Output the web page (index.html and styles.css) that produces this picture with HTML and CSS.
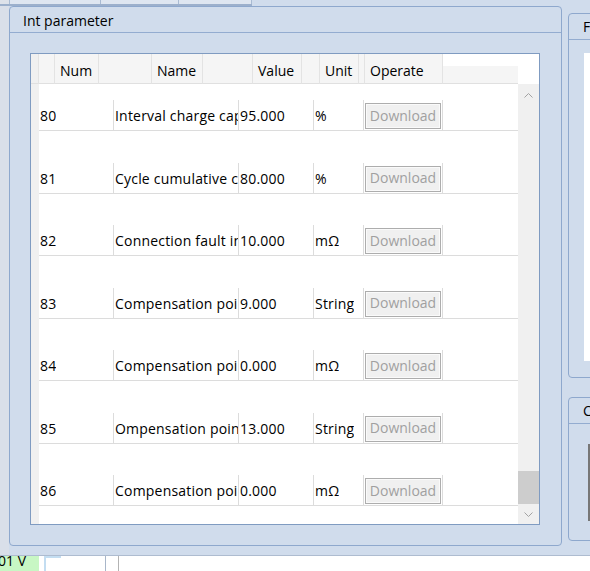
FILE: index.html
```html
<!DOCTYPE html>
<html>
<head>
<meta charset="utf-8">
<link rel="stylesheet" href="styles.css">
</head>
<body>
<div class="screen">
  <div class="topbar">
    <div class="tabs">
      <div class="tab tab-a"></div>
      <div class="tab tab-b"></div>
      <div class="tab tab-c"></div>
      <div class="tab tab-d"></div>
    </div>
  </div>
  <div class="main">
    <div class="leftstrip"></div>
    <section class="group g-main">
      <div class="group-title">Int parameter</div>
      <div class="main-body">
        <div class="grid">
          <div class="grid-head">
            <div class="hc w8"></div>
            <div class="hc w16"></div>
            <div class="hc w44">Num</div>
            <div class="hc w53"></div>
            <div class="hc w51">Name</div>
            <div class="hc w50"></div>
            <div class="hc w49">Value</div>
            <div class="hc w18"></div>
            <div class="hc w39">Unit</div>
            <div class="hc w6"></div>
            <div class="hc w78">Operate</div>
            <div class="hc hfill"></div>
            <div class="hblank"></div>
          </div>
          <div class="grid-body">
            <div class="rowhead-col"></div>
            <div class="rows">
              <div class="rows-inner">
                <div class="row"><div class="cells"><div class="c num"><span class="t">80</span></div><div class="c name"><span class="t">Interval charge capacity</span></div><div class="c val"><span class="t">95.000</span></div><div class="c unit"><span class="t">%</span></div><div class="c op"><button class="dl" disabled>Download</button></div></div></div>
                <div class="row"><div class="cells"><div class="c num"><span class="t">81</span></div><div class="c name"><span class="t">Cycle cumulative charge</span></div><div class="c val"><span class="t">80.000</span></div><div class="c unit"><span class="t">%</span></div><div class="c op"><button class="dl" disabled>Download</button></div></div></div>
                <div class="row"><div class="cells"><div class="c num"><span class="t">82</span></div><div class="c name"><span class="t">Connection fault internal resistance</span></div><div class="c val"><span class="t">10.000</span></div><div class="c unit"><span class="t">mΩ</span></div><div class="c op"><button class="dl" disabled>Download</button></div></div></div>
                <div class="row"><div class="cells"><div class="c num"><span class="t">83</span></div><div class="c name"><span class="t">Compensation point 1</span></div><div class="c val"><span class="t">9.000</span></div><div class="c unit"><span class="t">String</span></div><div class="c op"><button class="dl" disabled>Download</button></div></div></div>
                <div class="row"><div class="cells"><div class="c num"><span class="t">84</span></div><div class="c name"><span class="t">Compensation point 2</span></div><div class="c val"><span class="t">0.000</span></div><div class="c unit"><span class="t">mΩ</span></div><div class="c op"><button class="dl" disabled>Download</button></div></div></div>
                <div class="row"><div class="cells"><div class="c num"><span class="t">85</span></div><div class="c name"><span class="t">Ompensation point 3</span></div><div class="c val"><span class="t">13.000</span></div><div class="c unit"><span class="t">String</span></div><div class="c op"><button class="dl" disabled>Download</button></div></div></div>
                <div class="row"><div class="cells"><div class="c num"><span class="t">86</span></div><div class="c name"><span class="t">Compensation point 4</span></div><div class="c val"><span class="t">0.000</span></div><div class="c unit"><span class="t">mΩ</span></div><div class="c op"><button class="dl" disabled>Download</button></div></div></div>
                <div class="row"><div class="cells"><div class="c num"><span class="t">87</span></div><div class="c name"><span class="t">Compensation point 5</span></div><div class="c val"><span class="t">0.000</span></div><div class="c unit"><span class="t">mΩ</span></div><div class="c op"><button class="dl" disabled>Download</button></div></div></div>
              </div>
            </div>
            <div class="vscroll">
              <div class="sb-up"><svg width="9" height="5" viewBox="0 0 9 5"><polyline points="0.5,4.5 4.5,0.5 8.5,4.5" fill="none" stroke="#a3a3a3" stroke-width="1"/></svg></div>
              <div class="sb-track"><div class="sb-thumb"></div></div>
              <div class="sb-down"><svg width="9" height="5" viewBox="0 0 9 5"><polyline points="0.5,0.5 4.5,4.5 8.5,0.5" fill="none" stroke="#a3a3a3" stroke-width="1"/></svg></div>
            </div>
          </div>
        </div>
      </div>
    </section>
    <div class="side">
      <section class="group g-f">
        <div class="group-title side-title">F</div>
        <div class="f-body"><div class="f-white"></div></div>
      </section>
      <section class="group g-c">
        <div class="group-title side-title">C</div>
        <div class="c-body"><div class="c-line"></div></div>
      </section>
    </div>
  </div>
  <div class="status">
    <div class="st-green"><span class="st-text">01 V</span></div>
    <div class="st-gap"></div>
    <div class="st-cell"><div class="st-glint"></div></div>
    <div class="st-sep"></div>
  </div>
</div>
</body>
</html>
```

FILE: styles.css
```css
html, body {
  margin: 0;
  padding: 0;
}
body {
  width: 590px;
  height: 571px;
  overflow: hidden;
  font-family: "Open Sans", "Noto Sans", sans-serif;
  font-size: 14px;
  color: #000;
  background: #fff;
}
.screen {
  width: 590px;
  height: 571px;
  display: flex;
  flex-direction: column;
  background: #d0dcec;
  overflow: hidden;
}

/* top tabs strip */
.topbar {
  height: 6px;
  flex: none;
  display: flex;
}
.tabs {
  width: 252px;
  height: 6px;
  display: flex;
  box-sizing: border-box;
  border-bottom: 2px solid #9cb0cc;
  background: #dee6f1;
}
.tab {
  box-sizing: border-box;
  border-right: 1px solid #a9bbd3;
}
.tab-a { width: 10px; background: #dde2ea; }
.tab-b { width: 91px; }
.tab-c { width: 78px; }
.tab-d { width: 73px; }

/* main area */
.main {
  flex: none;
  height: 550px;
  box-sizing: border-box;
  border-bottom: 1px solid #aebcd0;
  display: flex;
  overflow: hidden;
}
.leftstrip {
  width: 9px;
  flex: none;
  background: #d9dfe9;
}
.group {
  box-sizing: border-box;
  border: 1px solid #8ea8cd;
  border-radius: 4px;
  display: flex;
  flex-direction: column;
  flex: none;
}
.group-title {
  flex: none;
  height: 26px;
  box-sizing: border-box;
  border-bottom: 1px solid #93acd0;
  padding-left: 13px;
  line-height: 27px;
  white-space: nowrap;
  overflow: hidden;
}
.g-main {
  width: 553px;
  height: 540px;
}
.main-body {
  padding: 20px 21px 20px 20px;
}

/* grid */
.grid {
  width: 510px;
  height: 472px;
  box-sizing: border-box;
  border: 1px solid #7f9bc1;
  background: #fff;
  display: flex;
  flex-direction: column;
}
.grid-head {
  flex: none;
  height: 30px;
  display: flex;
}
.hc {
  flex: none;
  height: 30px;
  box-sizing: border-box;
  background: #f5f5f5;
  border-right: 1px solid #e3e3e3;
  border-bottom: 1px solid #e0e0e0;
  padding: 2px 0 0 5px;
  line-height: 29px;
  white-space: nowrap;
  overflow: hidden;
}
.w8 { width: 8px; padding: 0; background: #f0f0f0; }
.w16 { width: 16px; padding: 0; }
.w44 { width: 44px; }
.w53 { width: 53px; padding: 0; }
.w51 { width: 51px; }
.w50 { width: 50px; padding: 0; }
.w49 { width: 49px; }
.w18 { width: 18px; padding: 0; }
.w39 { width: 39px; }
.w6 { width: 6px; padding: 0; }
.w78 { width: 78px; }
.hfill {
  width: 75px;
  height: 18px;
  margin-top: 12px;
  padding: 0;
  border-right: none;
}
.hblank {
  width: 21px;
  flex: none;
}

.grid-body {
  flex: 1;
  min-height: 0;
  display: flex;
}
.rowhead-col {
  width: 8px;
  flex: none;
  background: #f0f0f0;
}
.rows {
  width: 479px;
  flex: none;
  overflow: hidden;
}
.rows-inner {
  margin-top: -15.5px;
}
.row {
  height: 62.5px;
  box-sizing: border-box;
  padding-top: 31.5px;
  border-bottom: 1px solid #dcdcdc;
}
.cells {
  display: flex;
  height: 30px;
}
.c {
  flex: none;
  height: 30px;
  box-sizing: border-box;
  border-right: 1px solid #dcdcdc;
  padding-left: 1px;
  line-height: 31px;
  white-space: nowrap;
  overflow: hidden;
  letter-spacing: 0.2px;
}
.t {
  display: inline-block;
  max-width: 100%;
  overflow: hidden;
  vertical-align: top;
}
.num { width: 75px; }
.name { width: 125px; }
.val { width: 75px; }
.unit { width: 50px; }
.op {
  width: 79px;
  padding-left: 1px;
  letter-spacing: 0;
}
.dl {
  display: block;
  margin-top: 3px;
  width: 76px;
  height: 26px;
  box-sizing: border-box;
  border: 1px solid #adadad;
  box-shadow: inset 0 0 0 1px #fafafa;
  background: #f0f0f0;
  color: #a0a0a0;
  font-family: inherit;
  font-size: 14px;
  padding: 0 0 1px 0;
  line-height: 22px;
  text-align: center;
}

/* scrollbar */
.vscroll {
  width: 21px;
  flex: none;
  background: #f0f0f0;
  display: flex;
  flex-direction: column;
}
.sb-up {
  height: 23px;
  flex: none;
  display: flex;
  align-items: center;
  justify-content: center;
}
.sb-track {
  flex: 1;
  display: flex;
  flex-direction: column;
  justify-content: flex-end;
}
.sb-thumb {
  height: 33px;
  background: #cdcdcd;
}
.sb-down {
  height: 20px;
  flex: none;
  display: flex;
  align-items: center;
  justify-content: center;
}

/* right side */
.side {
  width: 40px;
  flex: none;
  margin-left: 6px;
  display: flex;
  flex-direction: column;
}
.side-title {
  line-height: 25px;
  padding-left: 14px;
}
.g-f {
  width: 40px;
  margin-top: 7px;
  height: 365px;
}
.f-body {
  padding: 13px 0 0 15px;
}
.f-white {
  height: 308px;
  background: #fff;
}
.g-c {
  width: 40px;
  margin-top: 19px;
  height: 144px;
}
.c-body {
  padding: 20px 0 0 19px;
}
.c-line {
  height: 77px;
  width: 10px;
  border-left: 2px solid #777;
}

/* status strip */
.status {
  flex: none;
  height: 15px;
  background: #fff;
  display: flex;
  overflow: hidden;
}
.st-green {
  width: 39px;
  flex: none;
  background: #c8f7c4;
  overflow: hidden;
  white-space: nowrap;
}
.st-text {
  display: block;
  margin-left: -2px;
  margin-top: -3px;
  line-height: 15px;
}
.st-gap {
  width: 5px;
  flex: none;
}
.st-cell {
  width: 62px;
  flex: none;
  box-sizing: border-box;
  border-right: 1px solid #a8b6c9;
}
.st-glint {
  width: 15px;
  height: 13px;
  border-top: 2px solid #c3ddf1;
  border-left: 2px solid #c3ddf1;
}
.st-sep {
  width: 13px;
  flex: none;
  box-sizing: border-box;
  border-right: 1px solid #b3b3b3;
}
```
